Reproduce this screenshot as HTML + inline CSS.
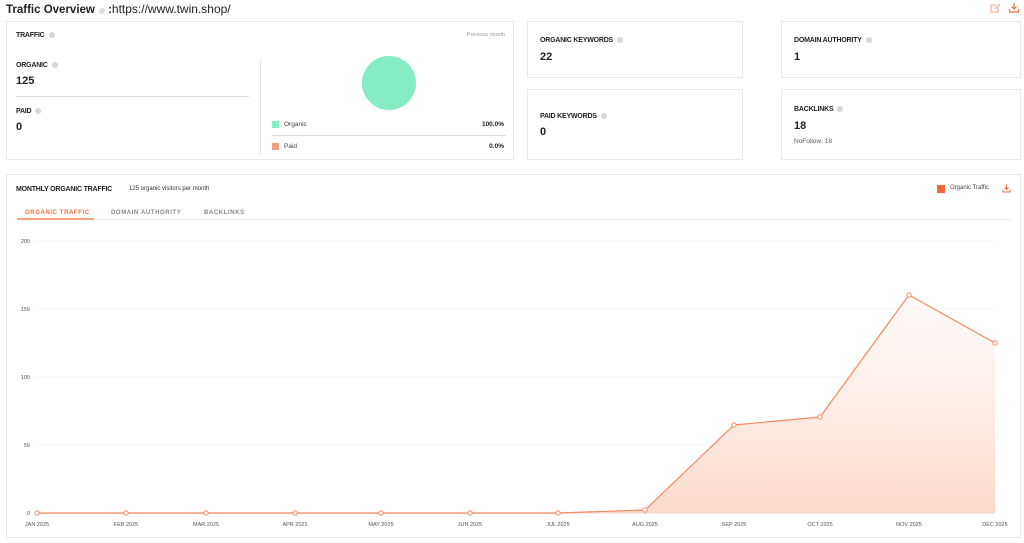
<!DOCTYPE html>
<html><head><meta charset="utf-8"><style>
*{margin:0;padding:0;box-sizing:border-box}
body{width:1024px;height:543px;background:#fff;font-family:"Liberation Sans",sans-serif;color:#222;position:relative;overflow:hidden}
.a{position:absolute}
.card{position:absolute;border:1px solid #e8e8e8;background:#fff}
.lab{position:absolute;font-size:7px;font-weight:bold;color:#222;letter-spacing:-0.2px}
.q{display:inline-block;width:6px;height:6px;border-radius:50%;background:#d6d6d6;margin-left:4px;vertical-align:-1px}
.num{position:absolute;font-size:11px;font-weight:bold;color:#222}
.ax{position:absolute;font-size:5.5px;color:#555}
</style></head><body>
<div class="a" style="left:6px;top:2px;font-size:11.5px;font-weight:bold">Traffic Overview<span class="q" style="background:#ddd"></span> <span style="font-weight:bold">:</span><span style="font-weight:normal;font-size:12px">https://www.twin.shop/</span></div>
<svg class="a" style="left:990px;top:2px" width="12" height="11" viewBox="0 0 12 11"><path d="M1 3h5M1 3v7h7V6" fill="none" stroke="#f5a07e" stroke-width="1"/><path d="M5 7l5-5" stroke="#f5a07e" stroke-width="1.2"/></svg>
<svg class="a" style="left:1008px;top:2px" width="12" height="11" viewBox="0 0 12 11"><path d="M6 1v6M3.5 4.5L6 7l2.5-2.5M1.5 7v3h9V7" fill="none" stroke="#f07040" stroke-width="1.2"/></svg>

<div class="card" style="left:6px;top:21px;width:508px;height:139px">
<div class="lab" style="left:9px;top:10px">TRAFFIC<span class="q"></span></div>
<div class="a" style="right:8px;top:10px;font-size:5.5px;color:#999">Previous month</div>
<div class="lab" style="left:9px;top:40px">ORGANIC<span class="q"></span></div>
<div class="num" style="left:9px;top:53px">125</div>
<div class="a" style="left:9px;top:74px;width:233px;height:1px;background:#ddd"></div>
<div class="lab" style="left:9px;top:86px">PAID<span class="q"></span></div>
<div class="num" style="left:9px;top:99px">0</div>
<div class="a" style="left:253px;top:38px;width:1px;height:95px;background:#e3e3e3"></div>
<div class="a" style="left:355px;top:34px;width:54px;height:54px;border-radius:50%;background:#86ecc4"></div>
<div class="a" style="left:265px;top:99px;width:7px;height:7px;background:#86ecc4"></div>
<div class="a" style="left:277px;top:99px;font-size:6.5px;color:#444">Organic</div>
<div class="a" style="right:9px;top:99px;font-size:6.5px;font-weight:bold">100.0%</div>
<div class="a" style="left:265px;top:113px;width:234px;height:1px;background:#ddd"></div>
<div class="a" style="left:265px;top:121px;width:7px;height:7px;background:#f5a07e"></div>
<div class="a" style="left:277px;top:121px;font-size:6.5px;color:#444">Paid</div>
<div class="a" style="right:9px;top:121px;font-size:6.5px;font-weight:bold">0.0%</div>
</div>

<div class="card" style="left:527px;top:21px;width:216px;height:57px">
<div class="lab" style="left:12px;top:15px">ORGANIC KEYWORDS<span class="q"></span></div>
<div class="num" style="left:12px;top:29px">22</div></div>
<div class="card" style="left:781px;top:21px;width:240px;height:57px">
<div class="lab" style="left:12px;top:15px">DOMAIN AUTHORITY<span class="q"></span></div>
<div class="num" style="left:12px;top:29px">1</div></div>
<div class="card" style="left:527px;top:89px;width:216px;height:71px">
<div class="lab" style="left:12px;top:23px">PAID KEYWORDS<span class="q"></span></div>
<div class="num" style="left:12px;top:36px">0</div></div>
<div class="card" style="left:781px;top:89px;width:240px;height:71px">
<div class="lab" style="left:12px;top:16px">BACKLINKS<span class="q"></span></div>
<div class="num" style="left:12px;top:30px">18</div>
<div class="a" style="left:12px;top:48px;font-size:6.5px;color:#555">NoFollow: 18</div></div>

<div class="card" style="left:6px;top:174px;width:1015px;height:364px">
<div class="lab" style="left:9px;top:11px;font-size:7px">MONTHLY ORGANIC TRAFFIC</div>
<div class="a" style="left:122px;top:11px;font-size:6px;color:#333">125 organic visitors per month</div>
<div class="a" style="left:930px;top:10px;width:8px;height:8px;background:#f26a3a"></div>
<div class="a" style="left:943px;top:10px;font-size:6px;color:#444">Organic Traffic</div>
<svg class="a" style="left:995px;top:9px" width="9" height="9" viewBox="0 0 9 9"><path d="M4.5 0.5v5M2.5 3.5l2 2 2-2M1 5.5v2.5h7V5.5" fill="none" stroke="#f07040" stroke-width="1"/></svg>
<div class="a" style="left:18px;top:35px;font-size:6px;letter-spacing:0.6px;color:#f07040;font-weight:bold">ORGANIC TRAFFIC</div>
<div class="a" style="left:10px;top:43px;width:77px;height:1.5px;background:#f5a07e"></div>
<div class="a" style="left:104px;top:35px;font-size:6px;letter-spacing:0.6px;color:#888;font-weight:bold">DOMAIN AUTHORITY</div>
<div class="a" style="left:197px;top:35px;font-size:6px;letter-spacing:0.6px;color:#888;font-weight:bold">BACKLINKS</div>
<div class="a" style="left:87px;top:44px;width:918px;height:1px;background:#eee"></div>
</div>

<svg class="a" style="left:0;top:0" width="1024" height="543">
<defs><linearGradient id="g" x1="0" y1="0" x2="0" y2="1"><stop offset="0" stop-color="#fde9e0" stop-opacity="0.2"/><stop offset="1" stop-color="#fcd9cb"/></linearGradient></defs>
<g stroke="#f5f5f5" stroke-width="1"><line x1="35" y1="241" x2="995" y2="241"/><line x1="35" y1="309" x2="995" y2="309"/><line x1="35" y1="377" x2="995" y2="377"/><line x1="35" y1="445" x2="995" y2="445"/></g>
<line x1="35" y1="513.5" x2="995" y2="513.5" stroke="#eee"/>
<path d="M37 513L126 513L206 513L295 513L381 513L470 513L558 513L645 510L734 425L820 417L909 295L995 343L995 513Z" fill="url(#g)"/>
<polyline points="37,513 126,513 206,513 295,513 381,513 470,513 558,513 645,510 734,425 820,417 909,295 995,343" fill="none" stroke="#f58a62" stroke-width="1.2"/>
<g fill="#fff" stroke="#f58a62" stroke-width="1"><circle cx="37" cy="513" r="2.2"/><circle cx="126" cy="513" r="2.2"/><circle cx="206" cy="513" r="2.2"/><circle cx="295" cy="513" r="2.2"/><circle cx="381" cy="513" r="2.2"/><circle cx="470" cy="513" r="2.2"/><circle cx="558" cy="513" r="2.2"/><circle cx="645" cy="510" r="2.2"/><circle cx="734" cy="425" r="2.2"/><circle cx="820" cy="417" r="2.2"/><circle cx="909" cy="295" r="2.2"/><circle cx="995" cy="343" r="2.2"/></g>
<g font-family="Liberation Sans" font-size="5.5" fill="#555" text-anchor="end"><text x="30" y="243">200</text><text x="30" y="311">150</text><text x="30" y="379">100</text><text x="30" y="447">50</text><text x="30" y="515">0</text></g>
<g font-family="Liberation Sans" font-size="5.5" fill="#555" text-anchor="middle"><text x="37" y="526">JAN 2025</text><text x="126" y="526">FEB 2025</text><text x="206" y="526">MAR 2025</text><text x="295" y="526">APR 2025</text><text x="381" y="526">MAY 2025</text><text x="470" y="526">JUN 2025</text><text x="558" y="526">JUL 2025</text><text x="645" y="526">AUG 2025</text><text x="734" y="526">SEP 2025</text><text x="820" y="526">OCT 2025</text><text x="909" y="526">NOV 2025</text><text x="995" y="526">DEC 2025</text></g>
</svg>
</body></html>
